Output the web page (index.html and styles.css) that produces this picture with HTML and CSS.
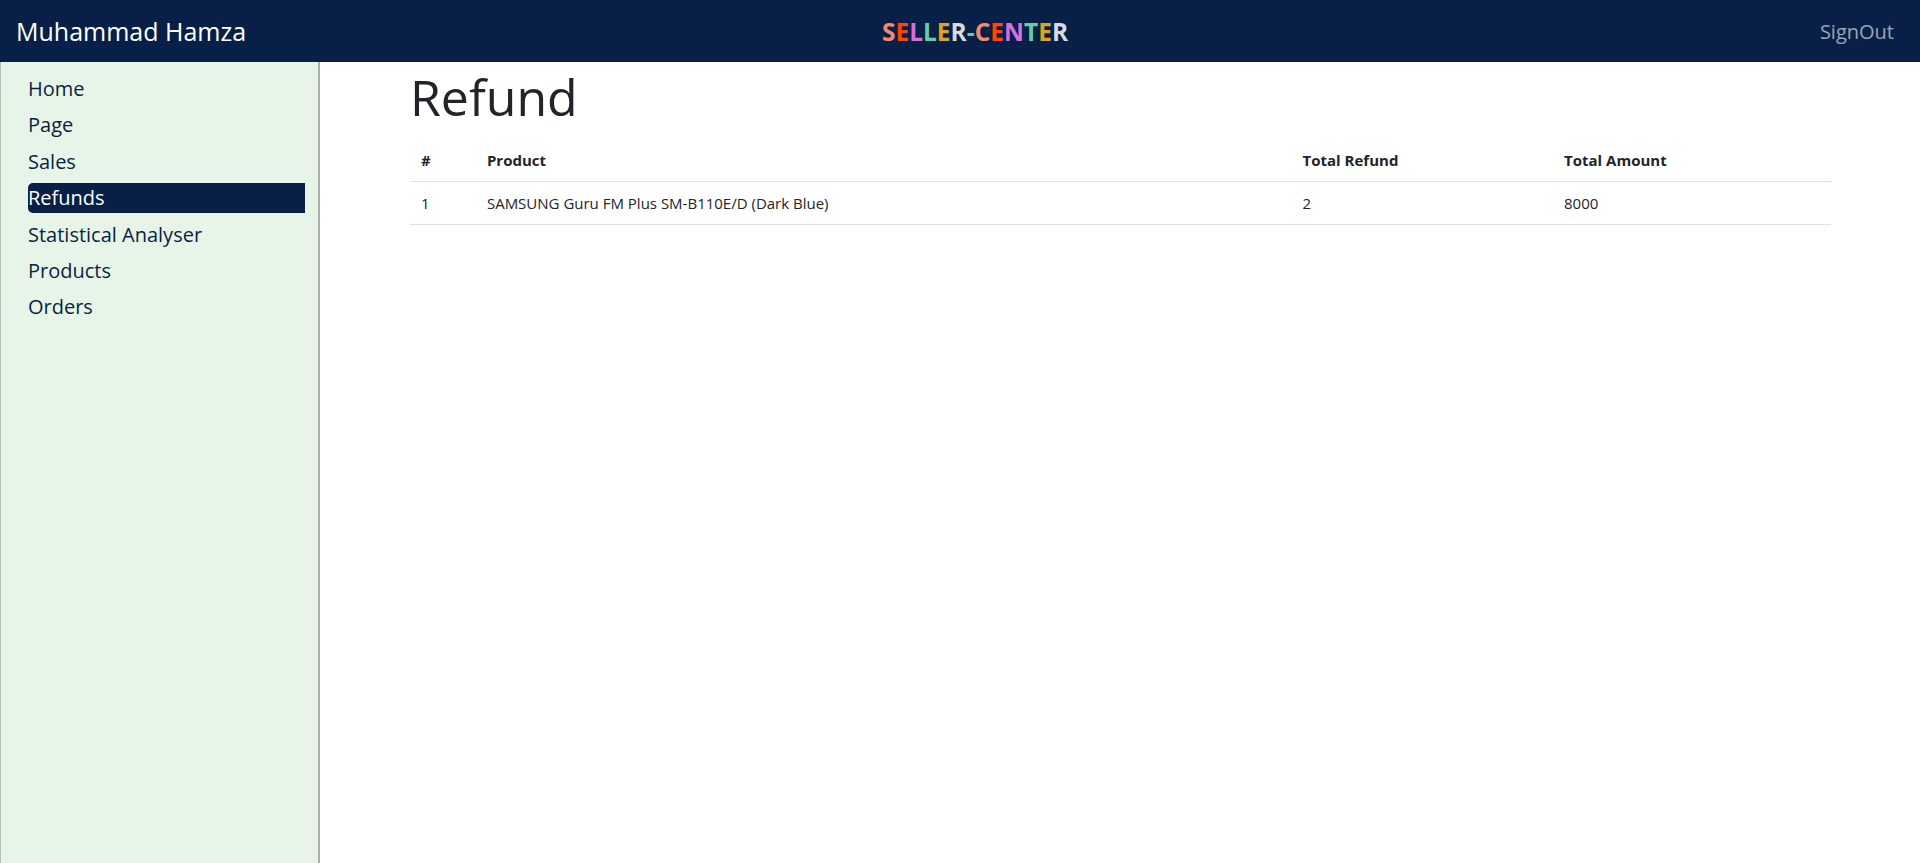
FILE: index.html
```html
<!DOCTYPE html>
<html lang="en">
<head>
<meta charset="utf-8">
<title>Seller Center - Refund</title>
<link rel="stylesheet" href="styles.css">
</head>
<body>
<header class="topbar">
  <div class="brand-name">Muhammad Hamza</div>
  <div class="logo">
    <span class="c1">S</span><span class="c2">E</span><span class="c3">L</span><span class="c4">L</span><span class="c5">E</span><span class="c6">R</span><span class="c4">-</span><span class="c1">C</span><span class="c2">E</span><span class="c3">N</span><span class="c4">T</span><span class="c5">E</span><span class="c6">R</span>
  </div>
  <div class="signout"><a href="#">SignOut</a></div>
</header>
<div class="layout">
  <aside class="sidebar">
    <ul class="nav">
      <li><a href="#">Home</a></li>
      <li><a href="#">Page</a></li>
      <li><a href="#">Sales</a></li>
      <li><a href="#" class="active">Refunds</a></li>
      <li><a href="#">Statistical Analyser</a></li>
      <li><a href="#">Products</a></li>
      <li><a href="#">Orders</a></li>
    </ul>
  </aside>
  <main class="main">
    <h1 class="title">Refund</h1>
    <table class="table">
      <thead>
        <tr>
          <th class="col-idx">#</th>
          <th class="col-product">Product</th>
          <th class="col-refund">Total Refund</th>
          <th class="col-amount">Total Amount</th>
        </tr>
      </thead>
      <tbody>
        <tr>
          <td>1</td>
          <td>SAMSUNG Guru FM Plus SM-B110E/D (Dark Blue)</td>
          <td>2</td>
          <td>8000</td>
        </tr>
      </tbody>
    </table>
  </main>
</div>
</body>
</html>
```
FILE: styles.css
```css
* { box-sizing: border-box; }
html, body { margin: 0; padding: 0; height: 100%; }
body {
  font-family: "Open Sans", "Noto Sans", sans-serif;
  color: #212529;
  background: #fff;
  display: flex;
  flex-direction: column;
  overflow: hidden;
}
.topbar {
  height: 62px;
  flex: none;
  background: #081f47;
  display: grid;
  grid-template-columns: 1fr auto 1fr;
  align-items: center;
  padding: 0 26px 0 16px;
}
.brand-name {
  color: #fff;
  font-size: 25px;
}
.logo {
  font-size: 24.5px;
  font-weight: 700;
  margin-left: 40px;
}
.c1 { color: #f58a70; }
.c2 { color: #ff4500; }
.c3 { color: #da70d6; }
.c4 { color: #66cdaa; }
.c5 { color: #daa520; }
.c6 { color: #d8dce0; }
.signout { text-align: right; }
.signout a {
  color: rgba(255, 255, 255, 0.6);
  text-decoration: none;
  font-size: 20px;
}
.layout {
  flex: 1;
  display: flex;
  min-height: 0;
}
.sidebar {
  width: 320px;
  flex: none;
  background: #e7f5e8;
  border-left: 1px solid #b8beb8;
  border-right: 2px solid #a9b0aa;
  padding: 12px 13px 0 27px;
}
.nav {
  list-style: none;
  margin: 0;
  padding: 0;
  display: flex;
  flex-direction: column;
  gap: 6.4px;
}
.nav a {
  display: block;
  font-size: 20px;
  line-height: 30px;
  color: #0a1f45;
  text-decoration: none;
}
.nav a.active {
  background: #081f47;
  color: #fff;
  border-radius: 5px 0 0 5px;
}
.main {
  flex: 1;
  padding: 5px 89px 0 90px;
}
.title {
  font-size: 50px;
  font-weight: 400;
  line-height: 1.2;
  margin: 0 0 12px 0;
  color: #212529;
}
.table {
  width: 100%;
  border-collapse: collapse;
  table-layout: fixed;
  font-size: 15px;
  line-height: 18px;
}
.table th, .table td {
  text-align: left;
  padding: 12px 11px;
  border-bottom: 1px solid #dee2e6;
  vertical-align: top;
}
.table th { font-weight: 700; }
.col-idx { width: 4.64%; }
.col-product { width: 57.4%; }
.col-refund { width: 18.4%; }
.col-amount { width: 19.56%; }
```
